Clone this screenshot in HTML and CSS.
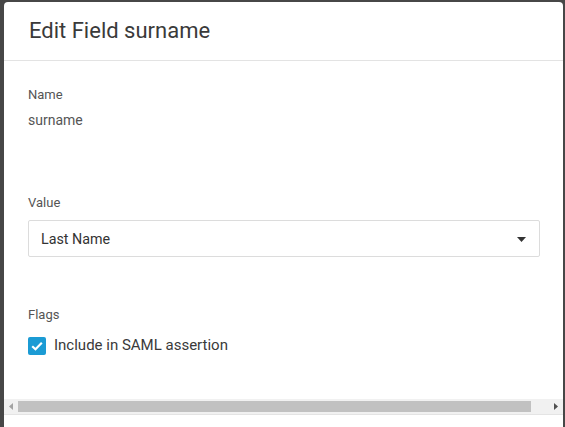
FILE: index.html
```html
<!DOCTYPE html>
<html>
<head>
<meta charset="utf-8">
<link rel="stylesheet" href="styles.css">
</head>
<body>
<div class="modal">
  <div class="modal-header">
    <h1 class="modal-title">Edit Field surname</h1>
  </div>
  <div class="modal-body">
    <div class="field field-name">
      <div class="label">Name</div>
      <div class="value-text">surname</div>
    </div>
    <div class="field field-value">
      <div class="label">Value</div>
      <div class="select">
        <span class="select-text">Last Name</span>
        <svg class="caret" width="9" height="5" viewBox="0 0 9 5"><path d="M0 0H9L4.5 5Z" fill="#333"/></svg>
      </div>
    </div>
    <div class="field field-flags">
      <div class="label">Flags</div>
      <label class="check-row">
        <span class="checkbox">
          <svg width="18" height="18" viewBox="0 0 18 18"><path d="M4.2 9.2L7.5 12.3L13.8 5.8" fill="none" stroke="#fff" stroke-width="2.2"/></svg>
        </span>
        <span class="check-label">Include in SAML assertion</span>
      </label>
    </div>
  </div>
  <div class="hscroll">
    <span class="arrow arrow-left"><svg width="4" height="7" viewBox="0 0 4 7"><path d="M4 0V7L0 3.5Z" fill="#a3a3a3"/></svg></span>
    <div class="thumb-area"><div class="thumb"></div></div>
    <span class="arrow arrow-right"><svg width="4" height="7" viewBox="0 0 4 7"><path d="M0 0V7L4 3.5Z" fill="#505050"/></svg></span>
  </div>
  <div class="modal-bottom"></div>
</div>
</body>
</html>
```
FILE: styles.css
```css
html, body {
  margin: 0;
  padding: 0;
  height: 100%;
  overflow: hidden;
}
body {
  background: #474747;
  font-family: Roboto, "Liberation Sans", sans-serif;
}
.modal {
  margin: 2px 2px 0 4px;
  height: 425px;
  background: #fff;
  border-radius: 4px 4px 0 0;
  display: flex;
  flex-direction: column;
}
.modal-header {
  height: 58px;
  border-bottom: 1px solid #e3e3e3;
  padding-left: 25px;
  display: flex;
  align-items: center;
}
.modal-title {
  margin: 0;
  font-size: 22px;
  font-weight: 400;
  color: #3a3a3a;
  line-height: 26px;
  padding-bottom: 1px;
}
.modal-body {
  flex: 1;
  padding: 26px 23px 0 24px;
}
.label {
  font-size: 13px;
  line-height: 16px;
  color: #555;
}
.value-text {
  margin-top: 7px;
  font-size: 14px;
  line-height: 20px;
  color: #555;
}
.field-value {
  margin-top: 65px;
}
.field-value .label {
  margin-bottom: 9px;
}
.select {
  height: 35px;
  border: 1px solid #dcdcdc;
  border-radius: 2px;
  display: flex;
  align-items: center;
  justify-content: space-between;
  padding: 0 13px 0 12px;
}
.select-text {
  font-size: 14.3px;
  color: #333;
  line-height: 20px;
  margin-top: 1px;
}
.caret {
  display: block;
  margin-top: 1px;
}
.field-flags {
  margin-top: 50px;
}
.check-row {
  display: flex;
  align-items: center;
  gap: 8px;
  margin-top: 14px;
}
.checkbox {
  width: 18px;
  height: 18px;
  border-radius: 2px;
  background: #1b9bd4;
  display: block;
}
.checkbox svg {
  display: block;
}
.check-label {
  font-size: 15px;
  line-height: 18px;
  color: #3a3a3a;
  margin-top: -3px;
}
.hscroll {
  height: 15px;
  background: #f1f1f1;
  border-bottom: 1px solid #e4e4e4;
  display: flex;
  align-items: center;
}
.arrow {
  width: 14px;
  display: flex;
  justify-content: center;
}
.arrow svg {
  display: block;
}
.thumb-area {
  flex: 1;
  height: 11px;
  padding-right: 18px;
}
.thumb {
  height: 11px;
  background: #c1c1c1;
}
.modal-bottom {
  height: 12px;
  background: #fff;
}
```
